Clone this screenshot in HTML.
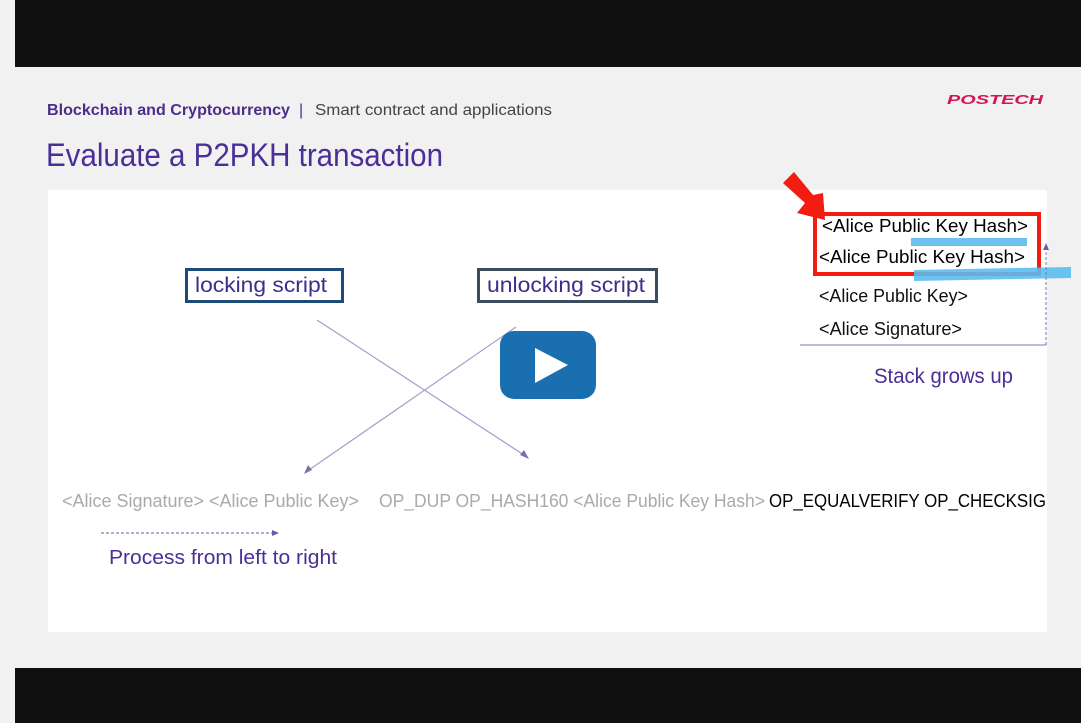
<!DOCTYPE html>
<html><head><meta charset="utf-8"><style>
html,body{margin:0;padding:0;width:1081px;height:723px;overflow:hidden;background:#f1f1f1}
svg{position:absolute;left:0;top:0}
text{font-family:"Liberation Sans",sans-serif}
</style></head><body>
<svg width="1081" height="723" viewBox="0 0 1081 723">
<rect x="0" y="0" width="1081" height="723" fill="#f2f2f2"/>
<rect x="15" y="0" width="1066" height="67" fill="#101010"/>
<rect x="15" y="668" width="1066" height="55" fill="#101010"/>
<rect x="15" y="67" width="1066" height="601" fill="#f1f1f1"/>
<text x="47" y="115" font-size="16" font-weight="bold" fill="#4b2e8c" textLength="243" lengthAdjust="spacingAndGlyphs">Blockchain and Cryptocurrency</text>
<text x="299" y="115" font-size="16" fill="#4b2e8c">|</text>
<text x="315" y="115" font-size="16" fill="#444" textLength="237" lengthAdjust="spacingAndGlyphs">Smart contract and applications</text>
<text x="46" y="166" font-size="32" fill="#4a2f96" textLength="397" lengthAdjust="spacingAndGlyphs">Evaluate a P2PKH transaction</text>
<text x="947" y="104" font-size="13" font-weight="bold" font-style="italic" fill="#d4145a" textLength="96" lengthAdjust="spacingAndGlyphs">POSTECH</text>
<rect x="48" y="190" width="999" height="442" fill="#fff"/>
<rect x="186.5" y="269.5" width="156" height="32" fill="none" stroke="#1e4a7a" stroke-width="3"/>
<text x="195" y="292" font-size="21" fill="#3d2e8a" textLength="132" lengthAdjust="spacingAndGlyphs">locking script</text>
<rect x="478.5" y="269.5" width="178" height="32" fill="none" stroke="#3d4b60" stroke-width="3"/>
<text x="487" y="292" font-size="21" fill="#3d2e8a" textLength="158" lengthAdjust="spacingAndGlyphs">unlocking script</text>
<g stroke="#a89cc8" stroke-width="1.2">
<line x1="317" y1="320" x2="527" y2="457"/>
<line x1="516" y1="327" x2="306" y2="472"/>
</g>
<polygon points="529,459 520,455 524,450" fill="#7b6fb0"/>
<polygon points="304,474 308,465 312,470" fill="#7b6fb0"/>
<rect x="500" y="331" width="96" height="68" rx="14" fill="#1a6fb0"/>
<polygon points="535,348 535,383 568,365" fill="#fff"/>
<text x="62" y="507" font-size="18" fill="#aaa" textLength="297" lengthAdjust="spacingAndGlyphs">&lt;Alice Signature&gt; &lt;Alice Public Key&gt;</text>
<text x="379" y="507" font-size="18" fill="#aaa" textLength="386" lengthAdjust="spacingAndGlyphs">OP_DUP OP_HASH160 &lt;Alice Public Key Hash&gt;</text>
<text x="769" y="507" font-size="18" fill="#000" textLength="277" lengthAdjust="spacingAndGlyphs">OP_EQUALVERIFY OP_CHECKSIG</text>
<line x1="101" y1="533" x2="274" y2="533" stroke="#6b5aa8" stroke-width="1" stroke-dasharray="3,2"/>
<polygon points="279,533 272,530 272,536" fill="#6b5aa8"/>
<text x="109" y="564" font-size="20" fill="#4a2f96" textLength="228" lengthAdjust="spacingAndGlyphs">Process from left to right</text>
<rect x="815" y="214" width="224" height="60" fill="none" stroke="#f21c10" stroke-width="4"/>
<text x="822" y="232" font-size="18" fill="#000" textLength="206" lengthAdjust="spacingAndGlyphs">&lt;Alice Public Key Hash&gt;</text>
<rect x="911" y="238" width="116" height="8" fill="#5bbdf0" opacity="0.9"/>
<text x="819" y="263" font-size="18" fill="#000" textLength="206" lengthAdjust="spacingAndGlyphs">&lt;Alice Public Key Hash&gt;</text>
<polygon points="914,270 1071,267 1071,278 914,281" fill="#5bbdf0" opacity="0.9"/>
<text x="819" y="302" font-size="18" fill="#111" textLength="149" lengthAdjust="spacingAndGlyphs">&lt;Alice Public Key&gt;</text>
<text x="819" y="335" font-size="18" fill="#111" textLength="143" lengthAdjust="spacingAndGlyphs">&lt;Alice Signature&gt;</text>
<line x1="800" y1="345" x2="1046" y2="345" stroke="#9a8fc4" stroke-width="1.2"/>
<line x1="1046" y1="345" x2="1046" y2="250" stroke="#7b6fb0" stroke-width="1" stroke-dasharray="3,2"/>
<polygon points="1046,243 1043,250 1049,250" fill="#6b5aa8"/>
<text x="874" y="383" font-size="21" fill="#4a2f96" textLength="139" lengthAdjust="spacingAndGlyphs">Stack grows up</text>
<polygon points="783,183 794,172 813,195 823,193 825,220 797,213 805,203" fill="#f21c10"/>
</svg>
</body></html>
